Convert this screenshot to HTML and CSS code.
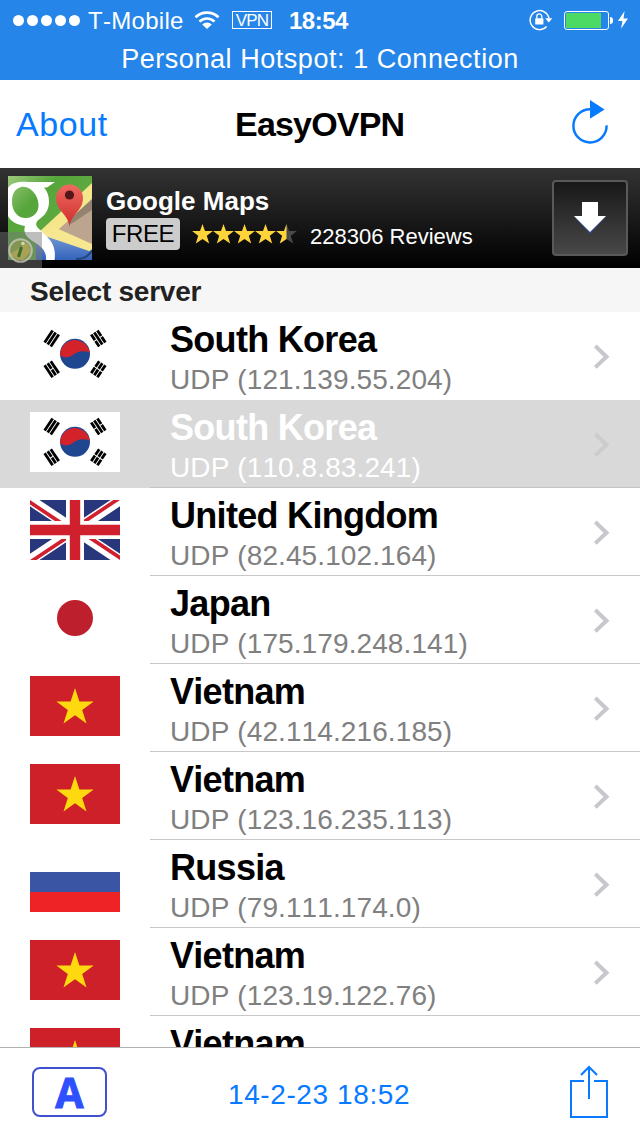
FILE: index.html
```html
<!DOCTYPE html>
<html lang="en">
<head>
    <meta charset="UTF-8">
    <meta name="viewport" content="width=device-width, initial-scale=1.0">
    <title>EasyOVPN</title>
    <link rel="stylesheet" href="styles.css">
</head>
<body>
    <!-- shared shapes -->
    <svg class="defs" width="0" height="0">
        <defs>
            <g id="solid"><path d="M-7.2 0H7.2"/></g>
            <g id="broken"><path d="M-7.2 0H-.5M.5 0H7.2"/></g>
            <symbol id="flag-kr" viewBox="0 0 90 60">
                <rect width="90" height="60" fill="#fff"/>
                <circle cx="45" cy="29.8" r="15" fill="#1f478f"/>
                <path d="M30 30.8C33 34.2 38.500 34 42.500 31.200S50.500 25.500 59.800 28.500A15 15 0 0 0 30 30.800Z" fill="#d3222a"/>
                <g stroke="#000" stroke-width="2.8" fill="none">
                    <g transform="translate(21.7 14.5) rotate(-56.3)">
                        <use href="#solid" y="-3.7"/><use href="#solid"/><use href="#solid" y="3.7"/>
                    </g>
                    <g transform="translate(68.3 14.5) rotate(56.3)">
                        <use href="#broken" y="-3.7"/><use href="#solid"/><use href="#broken" y="3.7"/>
                    </g>
                    <g transform="translate(21.7 45.2) rotate(56.3)">
                        <use href="#solid" y="-3.7"/><use href="#broken"/><use href="#solid" y="3.7"/>
                    </g>
                    <g transform="translate(68.3 45.2) rotate(-56.3)">
                        <use href="#broken" y="-3.7"/><use href="#broken"/><use href="#broken" y="3.7"/>
                    </g>
                </g>
            </symbol>
            <clipPath id="uk-clip"><path d="M45 30h45v30zv30h-45zh-45v-30zv-30h45z"/></clipPath>
            <symbol id="flag-uk" viewBox="0 0 90 60">
                <rect width="90" height="60" fill="#28367c"/>
                <path d="M0 0L90 60M90 0L0 60" stroke="#fff" stroke-width="10.5"/>
                <path d="M0 0L90 60M90 0L0 60" stroke="#d0202d" stroke-width="7.4" clip-path="url(#uk-clip)"/>
                <path d="M45 0V60M0 30H90" stroke="#fff" stroke-width="18"/>
                <path d="M45 0V60M0 30H90" stroke="#d0202d" stroke-width="10.4"/>
            </symbol>
            <symbol id="flag-jp" viewBox="0 0 90 60">
                <rect width="90" height="60" fill="#fff"/>
                <circle cx="45" cy="30" r="18" fill="#be1f2c"/>
            </symbol>
            <symbol id="flag-vn" viewBox="0 0 90 60">
                <rect width="90" height="60" fill="#cd2029"/>
                <path d="M45 12L49.4 25.5H63.7L52.2 34L56.5 47.5L45 39.2L33.5 47.5L37.8 34L26.3 25.5H40.6Z" fill="#ffd90f"/>
            </symbol>
            <symbol id="flag-ru" viewBox="0 0 90 60">
                <rect width="90" height="60" fill="#fff"/>
                <rect y="20" width="90" height="20" fill="#3955a3"/>
                <rect y="40" width="90" height="20" fill="#ee2326"/>
            </symbol>
            <symbol id="chevron" viewBox="0 0 18 26">
                <path d="M2.3 2L13.5 12.7L2.3 23.4" fill="none" stroke="#c7c7cc" stroke-width="4"/>
            </symbol>
            <symbol id="star" viewBox="0 0 21 20">
                <path d="M10.5 0L13 7H20.9L14.8 11.8L17.2 19.4L10.5 15L3.8 19.4L6.2 11.8L.1 7H8Z"/>
            </symbol>
        </defs>
    </svg>

    <header class="status">
        <div class="status-row">
            <div class="signal"><i></i><i></i><i></i><i></i><i></i></div>
            <span class="carrier">T-Mobile</span>
            <svg class="wifi" width="26" height="19" viewBox="0 0 26 19">
                <path d="M1.5 6.2a16.5 16.5 0 0 1 23 0M5.5 10.6a10.6 10.6 0 0 1 15 0" fill="none" stroke="#fff" stroke-width="2.7"/>
                <path d="M13 18L8.2 13.4a6.8 6.8 0 0 1 9.6 0z" fill="#fff"/>
            </svg>
            <span class="vpn">VPN</span>
            <span class="time">18:54</span>
            <svg class="lock" width="24" height="22" viewBox="0 0 24 22">
                <path d="M17.6 17.6A9.5 9.5 0 1 1 20 9.5" fill="none" stroke="#fff" stroke-width="1.5"/>
                <path d="M16.2 9.2H23.4L19.8 13.6Z" fill="#fff"/>
                <rect x="6.2" y="9.2" width="8.2" height="6.4" rx=".6" fill="#fff"/>
                <path d="M7.8 9.5V7.4a2.5 2.5 0 0 1 5 0V9.5" fill="none" stroke="#fff" stroke-width="1.3"/>
            </svg>
            <div class="battery"><div class="level"></div></div>
            <div class="battery-cap"></div>
            <svg class="bolt" width="12" height="18" viewBox="0 0 12 18">
                <path d="M7.6 0L1 10H5.4L4 17.8L11 7.4H6.5Z" fill="#fff"/>
            </svg>
        </div>
        <div class="hotspot">Personal Hotspot: 1 Connection</div>
    </header>

    <nav class="navbar">
        <a class="about">About</a>
        <h1>EasyOVPN</h1>
        <svg class="reload" width="40" height="48" viewBox="0 0 40 48">
            <path d="M20 9.2A16.6 16.6 0 1 0 36.6 25.4" fill="none" stroke="#077aff" stroke-width="2.5"/>
            <path d="M20 0L34.6 9.4L20 18.8Z" fill="#077aff"/>
        </svg>
    </nav>

    <section class="ad">
        <svg class="maps-icon" width="92" height="100" viewBox="0 0 92 100">
            <defs>
                <linearGradient id="land" x1="0" y1="0" x2="1" y2="1">
                    <stop offset="0" stop-color="#9ccb7c"/>
                    <stop offset=".3" stop-color="#55a53b"/>
                    <stop offset="1" stop-color="#6fb24c"/>
                </linearGradient>
                <linearGradient id="water" x1="0" y1="0" x2="0" y2="1">
                    <stop offset="0" stop-color="#7ba0d8"/>
                    <stop offset="1" stop-color="#3463bb"/>
                </linearGradient>
                <linearGradient id="pin" x1="0" y1="0" x2="0" y2="1">
                    <stop offset="0" stop-color="#ef6a60"/>
                    <stop offset="1" stop-color="#ce2c2c"/>
                </linearGradient>
                <clipPath id="tile"><rect x="8" y="8" width="84" height="84"/></clipPath>
            </defs>
            <g clip-path="url(#tile)">
                <rect x="8" y="8" width="84" height="84" fill="url(#land)"/>
                <path d="M92 28L55 60L92 80Z" fill="#bca58f"/>
                <path d="M92 30L66 51L71 56L92 42Z" fill="#948270"/>
                <path d="M36 68L48 64L92 84V92H36Z" fill="url(#water)"/>
                <path d="M92 15L38 65L44 69L59 61L92 31Z" fill="#f5e68c"/>
                <path d="M54 59L92 76V84L42 67Z" fill="#f7e791"/>
                <path d="M92 82Q88 91 76 91" fill="none" stroke="#24477f" stroke-width="2"/>
                <path fill-rule="evenodd" fill="#fff" d="M8 20C12 14 20 13.5 28 14H55L47 19.5H44C51 27 51 42 42 49C37 53 34 55 38 60C44 66 52 72 54 80Q55.5 86 54.5 92H46C47 84 42 79 34 74C26 69 23 64 25 58C18 57 11 54 8 48ZM12 34C12 44 19 51 27 50C36 49 40 42 38 33C36 24 28 17.5 21 19C14 21 12 27 12 34Z"/>
                <path d="M69.5 59C68.5 46 56 43 56 30A13.5 13.5 0 0 1 83 30C83 43 71 46 69.5 59Z" fill="url(#pin)"/>
                <circle cx="69.5" cy="27" r="4.6" fill="#54171a"/>
                <circle cx="20" cy="82" r="12" fill="#6aa046"/>
                <path d="M9 87L27 75L31 83L22 93Z" fill="#d8c556"/>
            </g>
            <rect y="64" width="42" height="36" fill="#777" fill-opacity=".48"/>
            <circle cx="20.5" cy="82.5" r="11.3" fill="#a3a63e" fill-opacity=".35" stroke="#c9ccc0" stroke-opacity=".75" stroke-width="2"/>
            <path d="M21.5 79L18.5 89" stroke="#3f6f27" stroke-width="3"/>
            <circle cx="23" cy="75.5" r="1.8" fill="#d6dba5"/>
        </svg>
        <div class="ad-text">
            <div class="ad-title">Google Maps</div>
            <div class="ad-info">
                <span class="free">FREE</span>
                <svg class="stars" width="105" height="20" viewBox="0 0 105 20">
                    <g fill="#ffd43b">
                        <use href="#star" width="21" height="20"/>
                        <use href="#star" x="21" width="21" height="20"/>
                        <use href="#star" x="42" width="21" height="20"/>
                        <use href="#star" x="63" width="21" height="20"/>
                    </g>
                    <use href="#star" x="84" width="21" height="20" fill="#4a4a4a"/>
                    <path d="M94.5 0V15L87.8 19.4L90.2 11.8L84.1 7H92Z" fill="#ffd43b"/>
                </svg>
                <span class="reviews">228306 Reviews</span>
            </div>
        </div>
        <div class="download">
            <svg width="36" height="36" viewBox="0 0 36 36">
                <path d="M2 16.5L18 34L34 16.5Z" fill="#33478e"/>
                <path d="M10 2H26V16H34L18 32L2 16H10Z" fill="#fff"/>
            </svg>
        </div>
    </section>

    <h2 class="section-title">Select server</h2>

    <main class="list">
        <div class="row">
            <svg class="flag"><use href="#flag-kr"/></svg>
            <div class="cell">
                <div class="info"><div class="country">South Korea</div><div class="address">UDP (121.139.55.204)</div></div>
                <svg class="arrow"><use href="#chevron"/></svg>
            </div>
        </div>
        <div class="row selected">
            <svg class="flag"><use href="#flag-kr"/></svg>
            <div class="cell">
                <div class="info"><div class="country">South Korea</div><div class="address">UDP (110.8.83.241)</div></div>
                <svg class="arrow"><use href="#chevron"/></svg>
            </div>
        </div>
        <div class="row">
            <svg class="flag"><use href="#flag-uk"/></svg>
            <div class="cell">
                <div class="info"><div class="country">United Kingdom</div><div class="address">UDP (82.45.102.164)</div></div>
                <svg class="arrow"><use href="#chevron"/></svg>
            </div>
        </div>
        <div class="row">
            <svg class="flag"><use href="#flag-jp"/></svg>
            <div class="cell">
                <div class="info"><div class="country">Japan</div><div class="address">UDP (175.179.248.141)</div></div>
                <svg class="arrow"><use href="#chevron"/></svg>
            </div>
        </div>
        <div class="row">
            <svg class="flag"><use href="#flag-vn"/></svg>
            <div class="cell">
                <div class="info"><div class="country">Vietnam</div><div class="address">UDP (42.114.216.185)</div></div>
                <svg class="arrow"><use href="#chevron"/></svg>
            </div>
        </div>
        <div class="row">
            <svg class="flag"><use href="#flag-vn"/></svg>
            <div class="cell">
                <div class="info"><div class="country">Vietnam</div><div class="address">UDP (123.16.235.113)</div></div>
                <svg class="arrow"><use href="#chevron"/></svg>
            </div>
        </div>
        <div class="row">
            <svg class="flag"><use href="#flag-ru"/></svg>
            <div class="cell">
                <div class="info"><div class="country">Russia</div><div class="address">UDP (79.111.174.0)</div></div>
                <svg class="arrow"><use href="#chevron"/></svg>
            </div>
        </div>
        <div class="row">
            <svg class="flag"><use href="#flag-vn"/></svg>
            <div class="cell">
                <div class="info"><div class="country">Vietnam</div><div class="address">UDP (123.19.122.76)</div></div>
                <svg class="arrow"><use href="#chevron"/></svg>
            </div>
        </div>
        <div class="row">
            <svg class="flag"><use href="#flag-vn"/></svg>
            <div class="cell">
                <div class="info"><div class="country">Vietnam</div></div>
            </div>
        </div>
    </main>

    <footer class="toolbar">
        <div class="auto">A</div>
        <div class="updated">14-2-23 18:52</div>
        <svg class="share" width="40" height="54" viewBox="0 0 40 54">
            <path d="M15 16H2V52H38V16H25" fill="none" stroke="#077aff" stroke-width="2"/>
            <path d="M20 34V2M12 10L20 2L28 10" fill="none" stroke="#077aff" stroke-width="2"/>
        </svg>
    </footer>
</body>
</html>
```

FILE: styles.css
```css
* {
    box-sizing: border-box;
}
body {
    font-family: "Liberation Sans", Arial, sans-serif;
    font-kerning: none;
    margin: 0;
    width: 640px;
    height: 1136px;
    background: #fff;
    display: flex;
    flex-direction: column;
    overflow: hidden;
    white-space: nowrap;
}
svg {
    display: block;
    flex: none;
}
.defs {
    height: 0;
}

/* status bar */
.status {
    height: 80px;
    flex: none;
    background: #2585e8;
    color: #fff;
}
.status-row {
    height: 40px;
    display: flex;
    align-items: center;
    padding-left: 13px;
}
.signal {
    display: flex;
    gap: 3px;
    width: 75px;
}
.signal i {
    width: 11px;
    height: 11px;
    border-radius: 50%;
    background: #fff;
}
.carrier {
    font-size: 24px;
    letter-spacing: 0.3px;
    padding-top: 1px;
    width: 106px;
}
.wifi {
    margin-right: 12px;
}
.vpn {
    width: 40px;
    height: 18px;
    border: 1px solid #fff;
    font-size: 17px;
    line-height: 17px;
    letter-spacing: -0.8px;
    text-align: center;
}
.time {
    font-size: 24px;
    font-weight: bold;
    letter-spacing: -0.5px;
    padding-top: 1px;
    margin-left: 17px;
    width: 240px;
}
.lock {
    margin-right: 11px;
}
.battery {
    width: 45px;
    height: 19px;
    border: 1px solid #fff;
    border-radius: 3px;
    padding: 1px;
}
.level {
    width: 35px;
    height: 15px;
    background: #4cd964;
}
.battery-cap {
    width: 3px;
    height: 7px;
    margin-left: 1px;
    background: #fff;
    border-radius: 0 3px 3px 0;
}
.bolt {
    margin-left: 4px;
}
.hotspot {
    font-size: 27px;
    line-height: 38px;
    letter-spacing: 0.55px;
    text-align: center;
}

/* nav bar */
.navbar {
    height: 88px;
    flex: none;
    display: flex;
    align-items: center;
    padding: 0 30px 0 16px;
}
.about {
    width: 219px;
    font-size: 34px;
    letter-spacing: 0.6px;
    color: #077aff;
}
.navbar h1 {
    margin: 0;
    width: 335px;
    font-size: 34px;
    letter-spacing: -0.8px;
}

/* ad banner */
.ad {
    height: 100px;
    flex: none;
    display: flex;
    background: linear-gradient(#333, #000);
    color: #fff;
}
.ad-text {
    width: 460px;
    padding: 18px 0 0 14px;
}
.ad-title {
    font-size: 26px;
    font-weight: bold;
    line-height: 30px;
}
.ad-info {
    display: flex;
    align-items: center;
    margin-top: 2px;
}
.free {
    width: 74px;
    height: 32px;
    border-radius: 4px;
    background: #ccc;
    color: #000;
    font-size: 24px;
    line-height: 32px;
    letter-spacing: -0.4px;
    text-align: center;
}
.stars {
    margin-left: 12px;
}
.reviews {
    margin-left: 13px;
    padding-top: 5px;
    font-size: 22px;
}
.download {
    width: 76px;
    height: 76px;
    margin-top: 12px;
    border: 2px solid #595959;
    border-radius: 4px;
    background: linear-gradient(#181818, #484848);
    display: flex;
    align-items: center;
    justify-content: center;
}

/* server list */
.section-title {
    margin: 0;
    height: 44px;
    flex: none;
    padding-left: 30px;
    background: #f6f6f6;
    color: #222;
    font-size: 28px;
    line-height: 47px;
    letter-spacing: -0.25px;
}
.list {
    flex: 1;
    min-height: 0;
    overflow: hidden;
}
.row {
    height: 88px;
    display: flex;
    padding-left: 30px;
}
.row:first-child .cell {
    border-color: transparent;
}
.flag {
    width: 90px;
    height: 60px;
    margin: 12px 30px 0 0;
}
.cell {
    flex: 1;
    display: flex;
    padding: 7px 0 0 20px;
    border-bottom: 1px solid #c8c7cc;
}
.info {
    width: 423px;
}
.country {
    font-size: 36px;
    font-weight: bold;
    line-height: 42px;
    letter-spacing: -0.7px;
}
.address {
    font-size: 28px;
    line-height: 38px;
    letter-spacing: 0.1px;
    color: #808080;
}
.arrow {
    width: 18px;
    height: 26px;
    margin-top: 25px;
}
.selected {
    background: #d9d9d9;
    color: #fff;
}
.selected .address {
    color: #fff;
}
.selected .cell {
    border-color: #c4c4c6;
}
.selected .arrow {
    opacity: 0.7;
}

/* bottom toolbar */
.toolbar {
    height: 89px;
    flex: none;
    display: flex;
    align-items: center;
    padding: 0 31px 0 32px;
    border-top: 1px solid #b2b2b2;
}
.auto {
    width: 75px;
    height: 50px;
    border: 2px solid #3f51cf;
    border-radius: 8px;
    font-family: "Open Sans", sans-serif;
    font-size: 41px;
    font-weight: bold;
    line-height: 46px;
    text-align: center;
    color: #2f50ff;
    -webkit-text-stroke: 1px #2f50ff;
}
.updated {
    width: 462px;
    padding: 6px 0 0 121px;
    font-size: 28px;
    letter-spacing: 0.6px;
    color: #077aff;
}
```
